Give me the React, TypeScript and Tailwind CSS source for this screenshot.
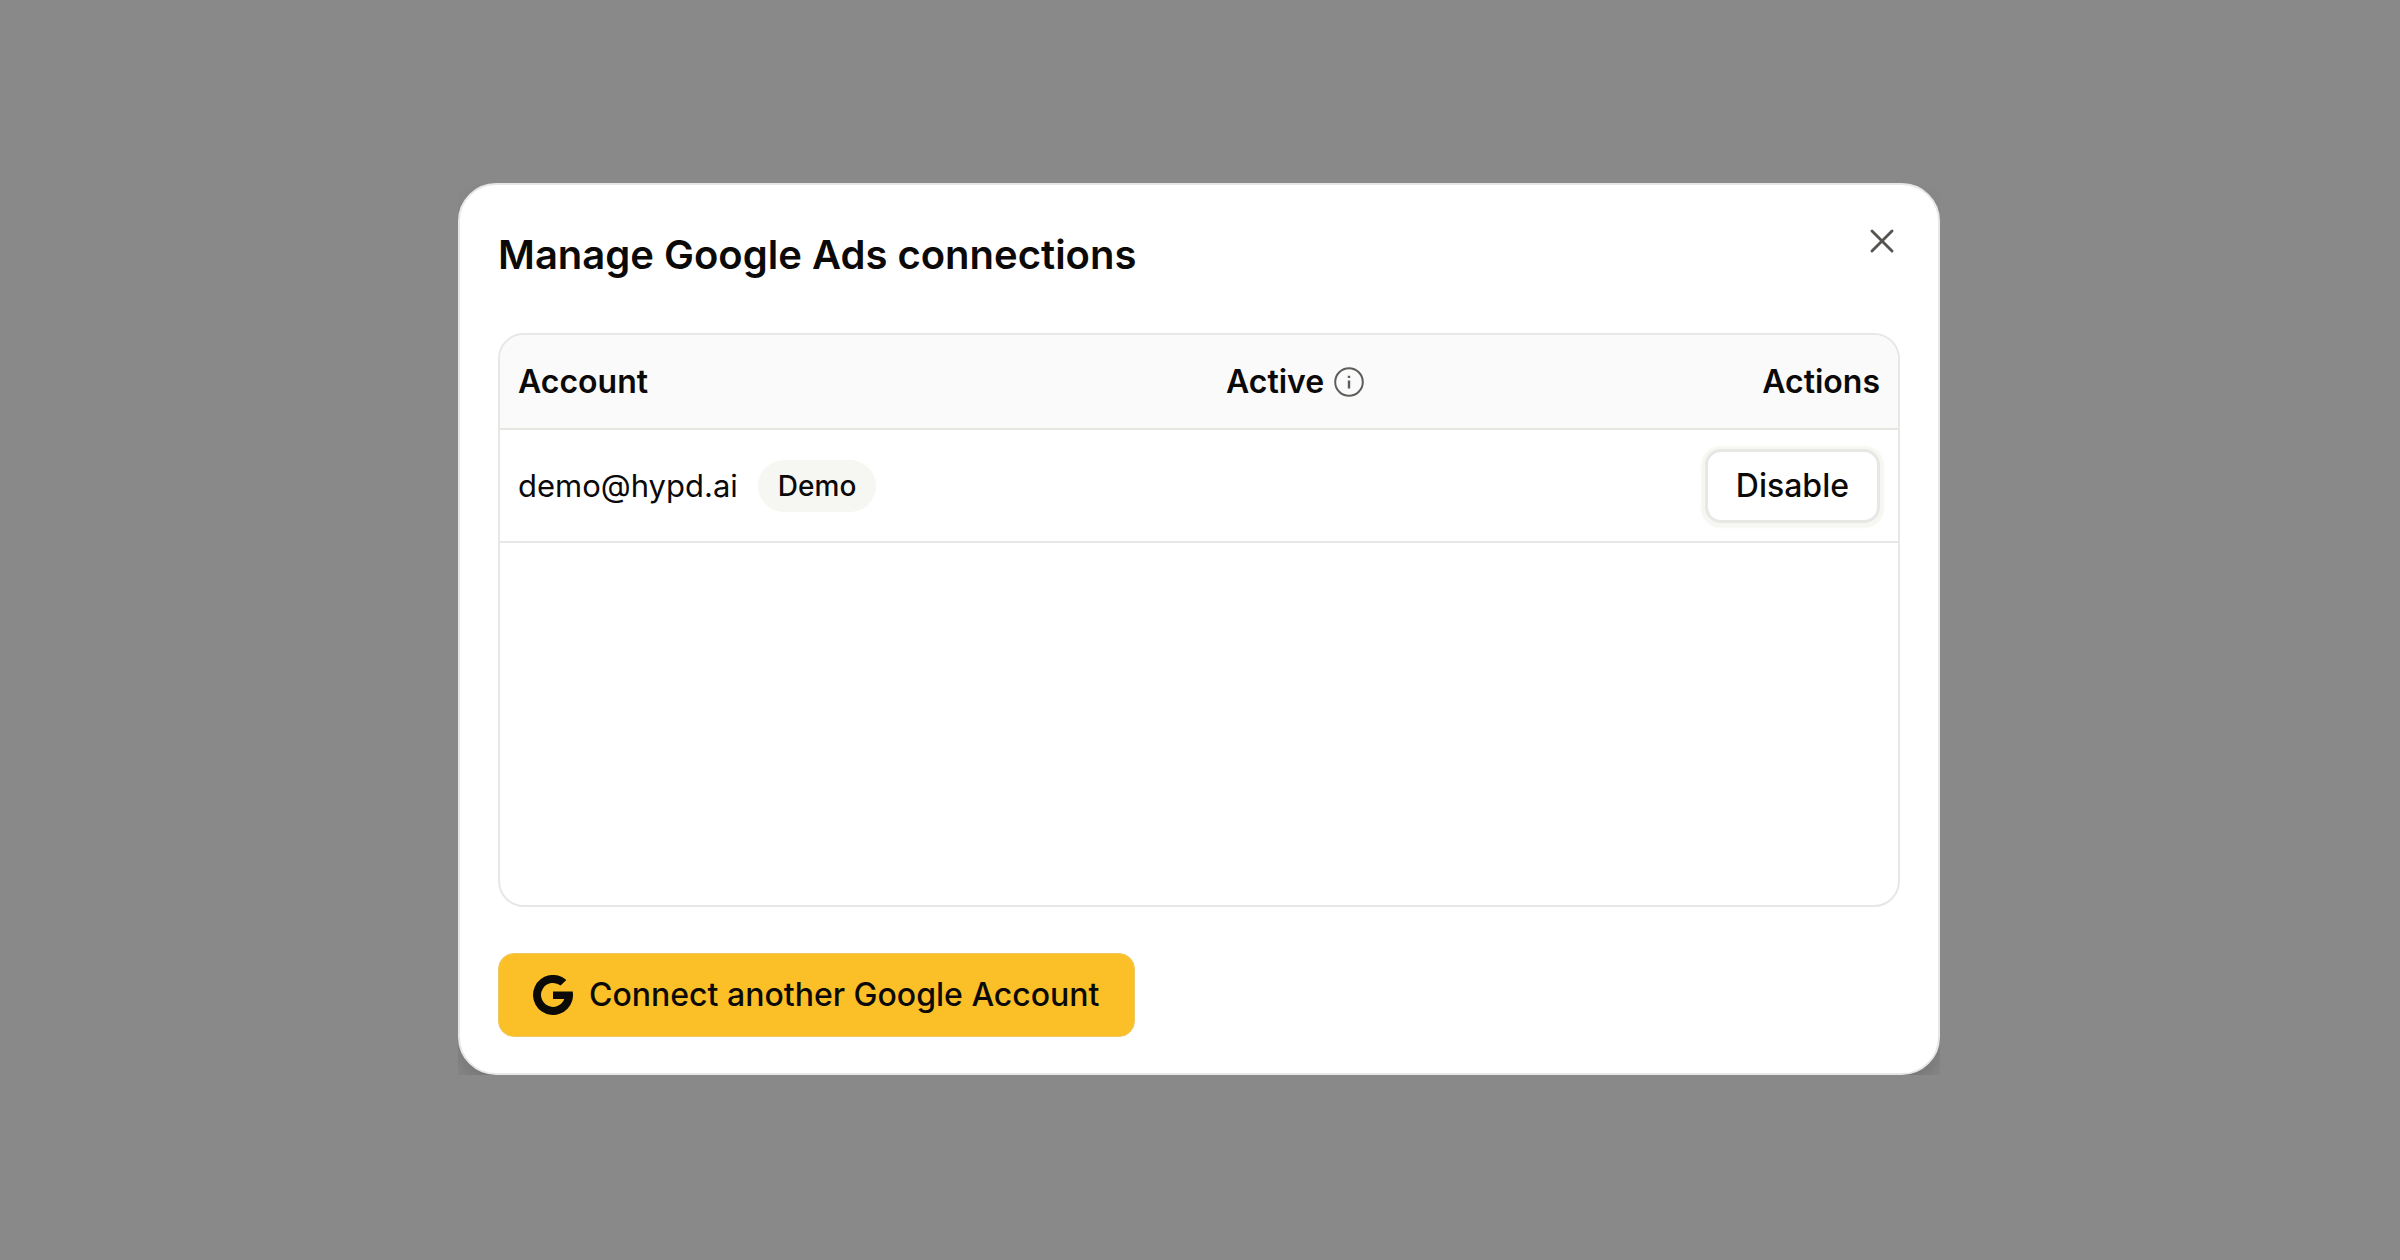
import React from "react";
import { X } from "lucide-react";

function GoogleMark() {
  return (
    <svg viewBox="0 0 39 39" className="size-10 shrink-0" fill="currentColor" aria-hidden="true">
      <path d="M32.5 4.9A19.5 19.5 0 1 0 38.7 16H19.5V23.5H30.5A11.7 11.7 0 1 1 26.9 10.3Z" />
    </svg>
  );
}

function InfoIcon() {
  return (
    <svg viewBox="0 0 30 30" className="size-[30px] shrink-0 text-[#5f5d5a]" fill="none" stroke="currentColor" strokeWidth="2" aria-hidden="true">
      <circle cx="15" cy="15" r="13.8" />
      <path d="M15 13.5V21.5" strokeWidth="2.4" />
      <path d="M15 8.7V11" strokeWidth="2.4" />
    </svg>
  );
}

export default function App() {
  return (
    <main className="flex min-h-screen items-center justify-center bg-[#898989] pr-0.5 pb-0.5 font-['Inter',sans-serif] text-[#0c0a09]">
      <div className="w-full max-w-[1482px] overflow-hidden">
        <section
          role="dialog"
          aria-labelledby="dialog-title"
          className="relative rounded-[38px] border-2 border-[#e7e7e5] bg-white px-[38px] pt-[46px] pb-9 shadow-[0_16px_30px_-6px_rgba(0,0,0,0.2)]"
        >
          <h1 id="dialog-title" className="text-[40px] leading-12 font-semibold">
            Manage Google Ads connections
          </h1>
          <button
            type="button"
            aria-label="Close"
            className="absolute top-9 right-9 flex size-10 items-center justify-center text-[#57534e]"
          >
            <X className="size-10" strokeWidth={1.75} />
          </button>

          <div className="mt-[54px] min-h-[574px] overflow-hidden rounded-[26px] border-2 border-[#e7e7e5]">
            <table className="w-full table-fixed border-collapse text-left text-[32px] leading-10">
              <thead>
                <tr className="h-[94px] border-b-2 border-[#e7e7e2] bg-[#fafafa]">
                  <th scope="col" className="w-[708px] px-[18px] font-semibold">Account</th>
                  <th scope="col" className="px-[18px] font-semibold">
                    <span className="flex items-center gap-2.5">
                      Active
                      <InfoIcon />
                    </span>
                  </th>
                  <th scope="col" className="px-[18px] text-right font-semibold">Actions</th>
                </tr>
              </thead>
              <tbody>
                <tr className="h-[113px] border-b-2 border-[#e7e7e7]">
                  <td className="px-[18px]">
                    <span className="flex items-center gap-5 text-[31px]">
                      demo@hypd.ai
                      <span className="rounded-full bg-[#f6f7f2] px-5 py-1.5 text-[28px] leading-10 font-medium">Demo</span>
                    </span>
                  </td>
                  <td />
                  <td className="px-[18px] text-right">
                    <button
                      type="button"
                      className="h-[74px] rounded-2xl border-[3px] border-[#e7e7e5] bg-white px-7 font-medium shadow-[0_1px_2px_4px_#f6f7f2]"
                    >
                      Disable
                    </button>
                  </td>
                </tr>
              </tbody>
            </table>
          </div>

          <button
            type="button"
            className="mt-[46px] flex h-[84px] items-center gap-4 rounded-2xl border border-[#edc75f] bg-[#fbc027] px-[34px] text-[32px] font-medium"
          >
            <GoogleMark />
            Connect another Google Account
          </button>
        </section>
      </div>
    </main>
  );
}
